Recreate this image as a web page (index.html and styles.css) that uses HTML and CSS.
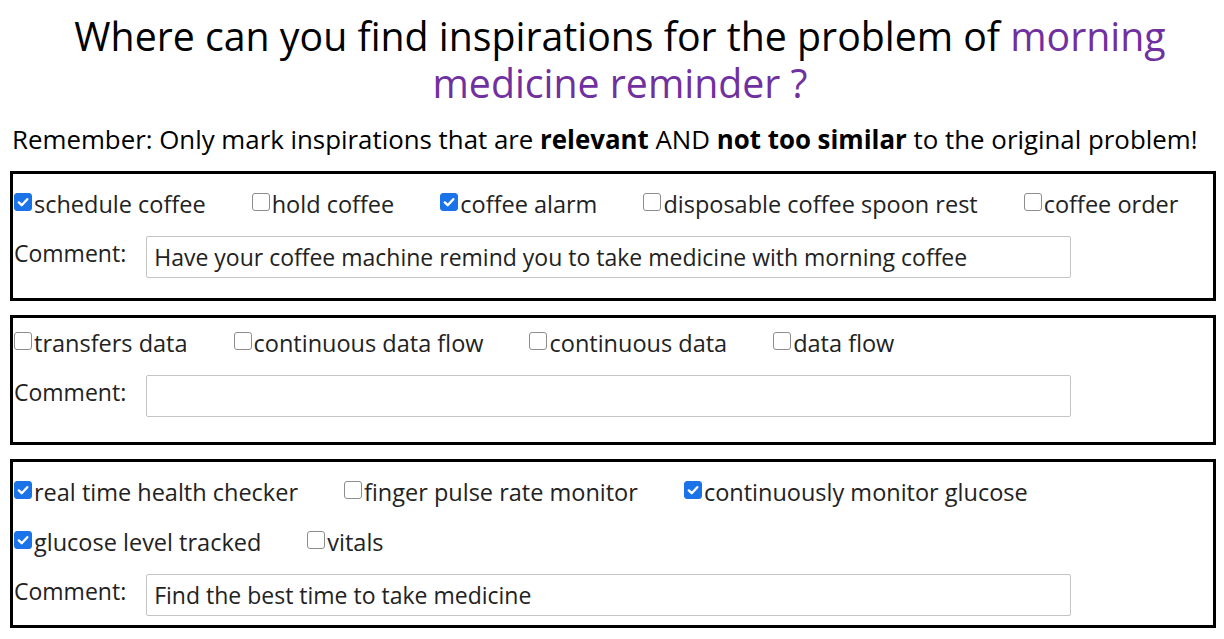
FILE: index.html
```html
<!DOCTYPE html>
<html>
    <head>
        <meta charset="UTF-8">
        <title>Inspirations</title>
        <link rel="stylesheet" href="styles.css">
    </head>

    <body>
        <h1 class="question">
            Where can you find inspirations for the problem of <span class="problem">morning</span>
            <span class="problem">medicine reminder ?</span>
        </h1>
        <p class="remember">
            Remember: Only mark inspirations that are <b>relevant</b> AND <b>not too similar</b> to the original problem!
        </p>

        <div class="group">
            <div class="options">
                <label class="option"><span class="check checked"><svg viewBox="0 0 16 16"><path d="M3.8 8.4l2.9 2.8 5.6-6"/></svg></span>schedule coffee</label>
                <label class="option"><span class="check"></span>hold coffee</label>
                <label class="option"><span class="check checked"><svg viewBox="0 0 16 16"><path d="M3.8 8.4l2.9 2.8 5.6-6"/></svg></span>coffee alarm</label>
                <label class="option"><span class="check"></span>disposable coffee spoon rest</label>
                <label class="option"><span class="check"></span>coffee order</label>
            </div>
            <div class="comment">
                <span class="comment-label">Comment:</span>
                <input type="text" class="comment-input" value="Have your coffee machine remind you to take medicine with morning coffee">
            </div>
        </div>

        <div class="group group-raised">
            <div class="options">
                <label class="option"><span class="check"></span>transfers data</label>
                <label class="option"><span class="check"></span>continuous data flow</label>
                <label class="option"><span class="check"></span>continuous data</label>
                <label class="option"><span class="check"></span>data flow</label>
            </div>
            <div class="comment">
                <span class="comment-label">Comment:</span>
                <input type="text" class="comment-input" value="">
            </div>
        </div>

        <div class="group">
            <div class="options">
                <label class="option"><span class="check checked"><svg viewBox="0 0 16 16"><path d="M3.8 8.4l2.9 2.8 5.6-6"/></svg></span>real time health checker</label>
                <label class="option"><span class="check"></span>finger pulse rate monitor</label>
                <label class="option"><span class="check checked"><svg viewBox="0 0 16 16"><path d="M3.8 8.4l2.9 2.8 5.6-6"/></svg></span>continuously monitor glucose</label>
                <label class="option"><span class="check checked"><svg viewBox="0 0 16 16"><path d="M3.8 8.4l2.9 2.8 5.6-6"/></svg></span>glucose level tracked</label>
                <label class="option"><span class="check"></span>vitals</label>
            </div>
            <div class="comment">
                <span class="comment-label">Comment:</span>
                <input type="text" class="comment-input" value="Find the best time to take medicine">
            </div>
        </div>
    </body>
</html>
```

FILE: styles.css
```css
* {
    box-sizing: border-box;
}

body {
    margin: 0 8px 0 10px;
    font-family: 'Open Sans', 'Noto Sans', sans-serif;
    color: #000;
    background: #fff;
}

.question {
    margin: 0;
    padding: 12px 0 0 14px;
    font-size: 39.25px;
    font-weight: normal;
    line-height: 47px;
    text-align: center;
}

.problem {
    color: #7030a0;
}

.remember {
    margin: 18px 0 17px 0;
    padding-left: 2px;
    font-size: 25.85px;
    line-height: 30px;
    white-space: nowrap;
}

.group {
    border: 3px solid #000;
    min-height: 130px;
    padding: 5px 0 8px 1px;
    margin-bottom: 14px;
    color: #222;
}

.group-raised {
    padding-top: 0;
}

.options {
    display: flex;
    flex-wrap: wrap;
}

.option {
    display: flex;
    align-items: center;
    height: 50px;
    margin-right: 46px;
    font-size: 23.5px;
    white-space: nowrap;
}

.option:last-child {
    margin-right: 0;
}

/* hand drawn checkbox, like the chromium one */
.check {
    display: block;
    flex: 0 0 18px;
    width: 18px;
    height: 18px;
    margin: 0 2px 4px 0;
    border: 1px solid #8d8d8d;
    border-radius: 3px;
    background: #fff;
}

.check.checked {
    border-color: #1a73e8;
    background: #1a73e8;
}

.check svg {
    display: block;
    width: 16px;
    height: 16px;
    fill: none;
    stroke: #fff;
    stroke-width: 2.4;
    stroke-linecap: round;
    stroke-linejoin: round;
}

.comment {
    display: flex;
    align-items: center;
    height: 50px;
    font-size: 23px;
}

.comment-label {
    margin-top: -2px;
}

.comment-input {
    width: 925px;
    height: 42px;
    margin: 5px 0 0 20px;
    padding: 0 7px;
    border: 1px solid #c4c4c4;
    border-radius: 2px;
    font-family: inherit;
    font-size: 23px;
    color: #222;
}
```
